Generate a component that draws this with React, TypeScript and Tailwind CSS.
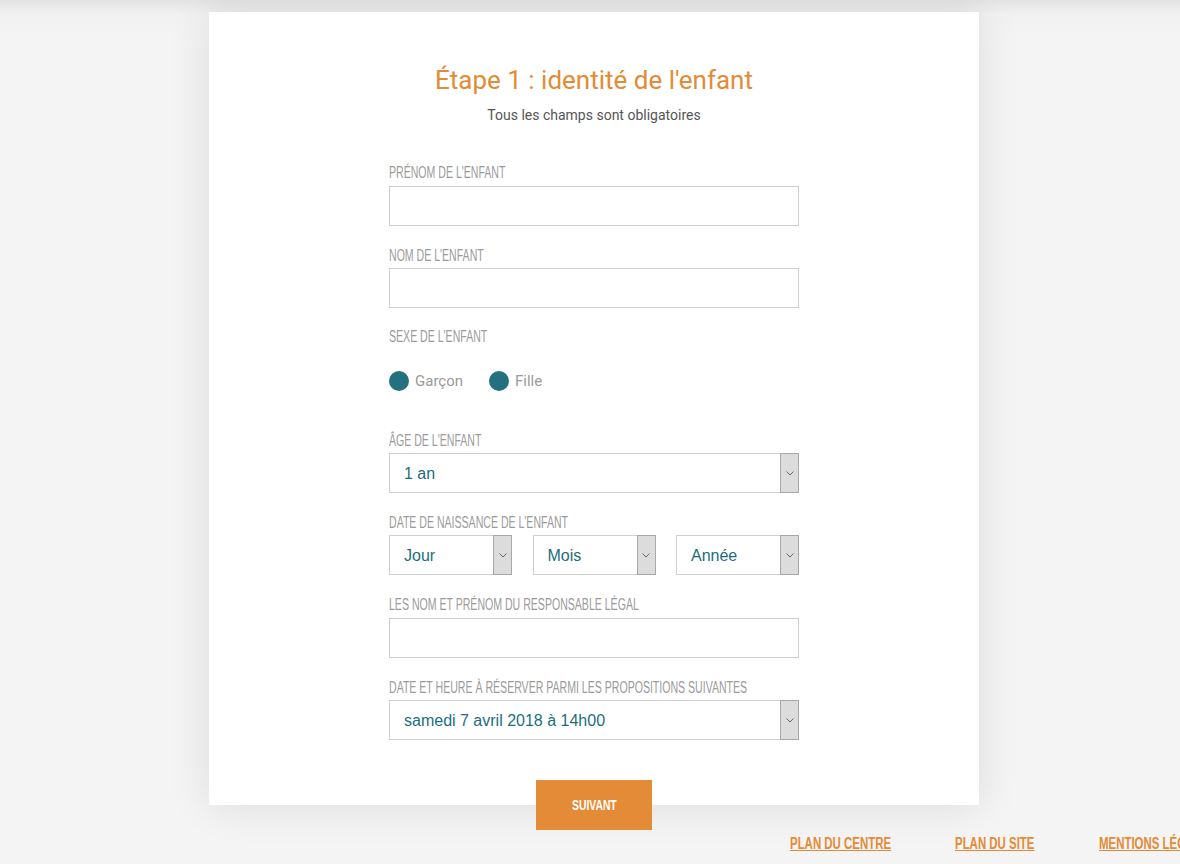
import React from "react";

const condensed =
  "inline-block whitespace-nowrap origin-left scale-x-[0.66] [font-family:'Liberation_Sans',Arial,sans-serif]";

function Label({ children, className = "" }: { children: React.ReactNode; className?: string }) {
  return (
    <label className={`block h-[20px] leading-[20px] whitespace-nowrap ${className}`}>
      <span className={`${condensed} text-[16px] text-[#9b9b9b] uppercase`}>{children}</span>
    </label>
  );
}

function Select({ value, className = "" }: { value: string; className?: string }) {
  return (
    <div className={`h-[40px] border border-[#cfcfcf] bg-white flex items-stretch ${className}`}>
      <div className="flex-1 flex items-center pl-[14px] pt-[2px] text-[16px] text-[#1b6e7d] [font-family:'Liberation_Sans',Arial,sans-serif]">
        {value}
      </div>
      <div className="-my-px -mr-px">
        <div className="h-[40px] w-[19px] bg-[#dcdcdc] border border-[#a8a8a8] flex items-center justify-center">
          <svg width="8" height="5" viewBox="0 0 8 5" fill="none">
            <path d="M0.5 0.5 L4 4 L7.5 0.5" stroke="#666" strokeWidth="1" />
          </svg>
        </div>
      </div>
    </div>
  );
}

function Input() {
  return <div className="h-[40px] border border-[#cfcfcf] bg-white" />;
}

function Radio({ label }: { label: string }) {
  return (
    <div className="flex items-center gap-[6px]">
      <span className="w-[20px] h-[20px] rounded-full bg-[#23717f]" />
      <span className="text-[15px] text-[#9a9a9a] [font-family:Roboto,sans-serif]">{label}</span>
    </div>
  );
}

function FooterLink({ children, width }: { children: React.ReactNode; width: string }) {
  return (
    <a className={`block shrink-0 ${width}`}>
      <span className="inline-block whitespace-nowrap origin-left scale-x-[0.715] text-[16px] font-bold text-[#e38b36] underline [font-family:'Liberation_Sans',Arial,sans-serif]">
        {children}
      </span>
    </a>
  );
}

export default function App() {
  return (
    <div className="min-h-[864px] w-[1180px] overflow-hidden bg-[linear-gradient(to_bottom,#e3e3e3_0px,#f1f1f1_14px,#f4f4f4_40px)] pt-[12px]">
      <div className="ml-[209px] w-[770px] h-[793px] bg-white shadow-[0_0_40px_rgba(0,0,0,0.10)] flex flex-col items-center">
        <h1 className="mt-[50px] h-[36px] leading-[36px] text-[26px] text-[#e38b36] [font-family:Roboto,sans-serif] font-normal">
          Étape 1 : identité de l'enfant
        </h1>
        <p className="mt-[8px] h-[18px] leading-[18px] text-[14px] text-[#555] [font-family:Roboto,sans-serif]">
          Tous les champs sont obligatoires
        </p>
        <div className="w-[410px] mt-[38px] flex flex-col">
          <Label className="mb-[4px]">Prénom de l'enfant</Label>
          <Input />
          <Label className="mt-[19px] mb-[3px]">Nom de l'enfant</Label>
          <Input />
          <Label className="mt-[18px]">Sexe de l'enfant</Label>
          <div className="mt-[25px] h-[20px] flex items-center gap-[26px]">
            <Radio label="Garçon" />
            <Radio label="Fille" />
          </div>
          <Label className="mt-[39px] mb-[3px]">Âge de l'enfant</Label>
          <Select value="1 an" />
          <Label className="mt-[19px] mb-[3px]">Date de naissance de l'enfant</Label>
          <div className="flex justify-between">
            <Select value="Jour" className="w-[123px]" />
            <Select value="Mois" className="w-[123px]" />
            <Select value="Année" className="w-[123px]" />
          </div>
          <Label className="mt-[19px] mb-[4px]">Les nom et prénom du responsable légal</Label>
          <Input />
          <Label className="mt-[19px] mb-[3px]">Date et heure à réserver parmi les propositions suivantes</Label>
          <Select value="samedi 7 avril 2018 à 14h00" />
        </div>
        <button className="mt-[40px] w-[116px] h-[50px] shrink-0 bg-[#e38b36] flex items-center justify-center">
          <span className="inline-block whitespace-nowrap scale-x-[0.69] text-white text-[15px] font-bold uppercase [font-family:'Liberation_Sans',Arial,sans-serif]">
            Suivant
          </span>
        </button>
      </div>
      <div className="flex pl-[790px] mt-[26px]">
        <FooterLink width="w-[165px]">PLAN DU CENTRE</FooterLink>
        <FooterLink width="w-[144px]">PLAN DU SITE</FooterLink>
        <FooterLink width="w-[200px]">MENTIONS LÉGALES</FooterLink>
      </div>
    </div>
  );
}
